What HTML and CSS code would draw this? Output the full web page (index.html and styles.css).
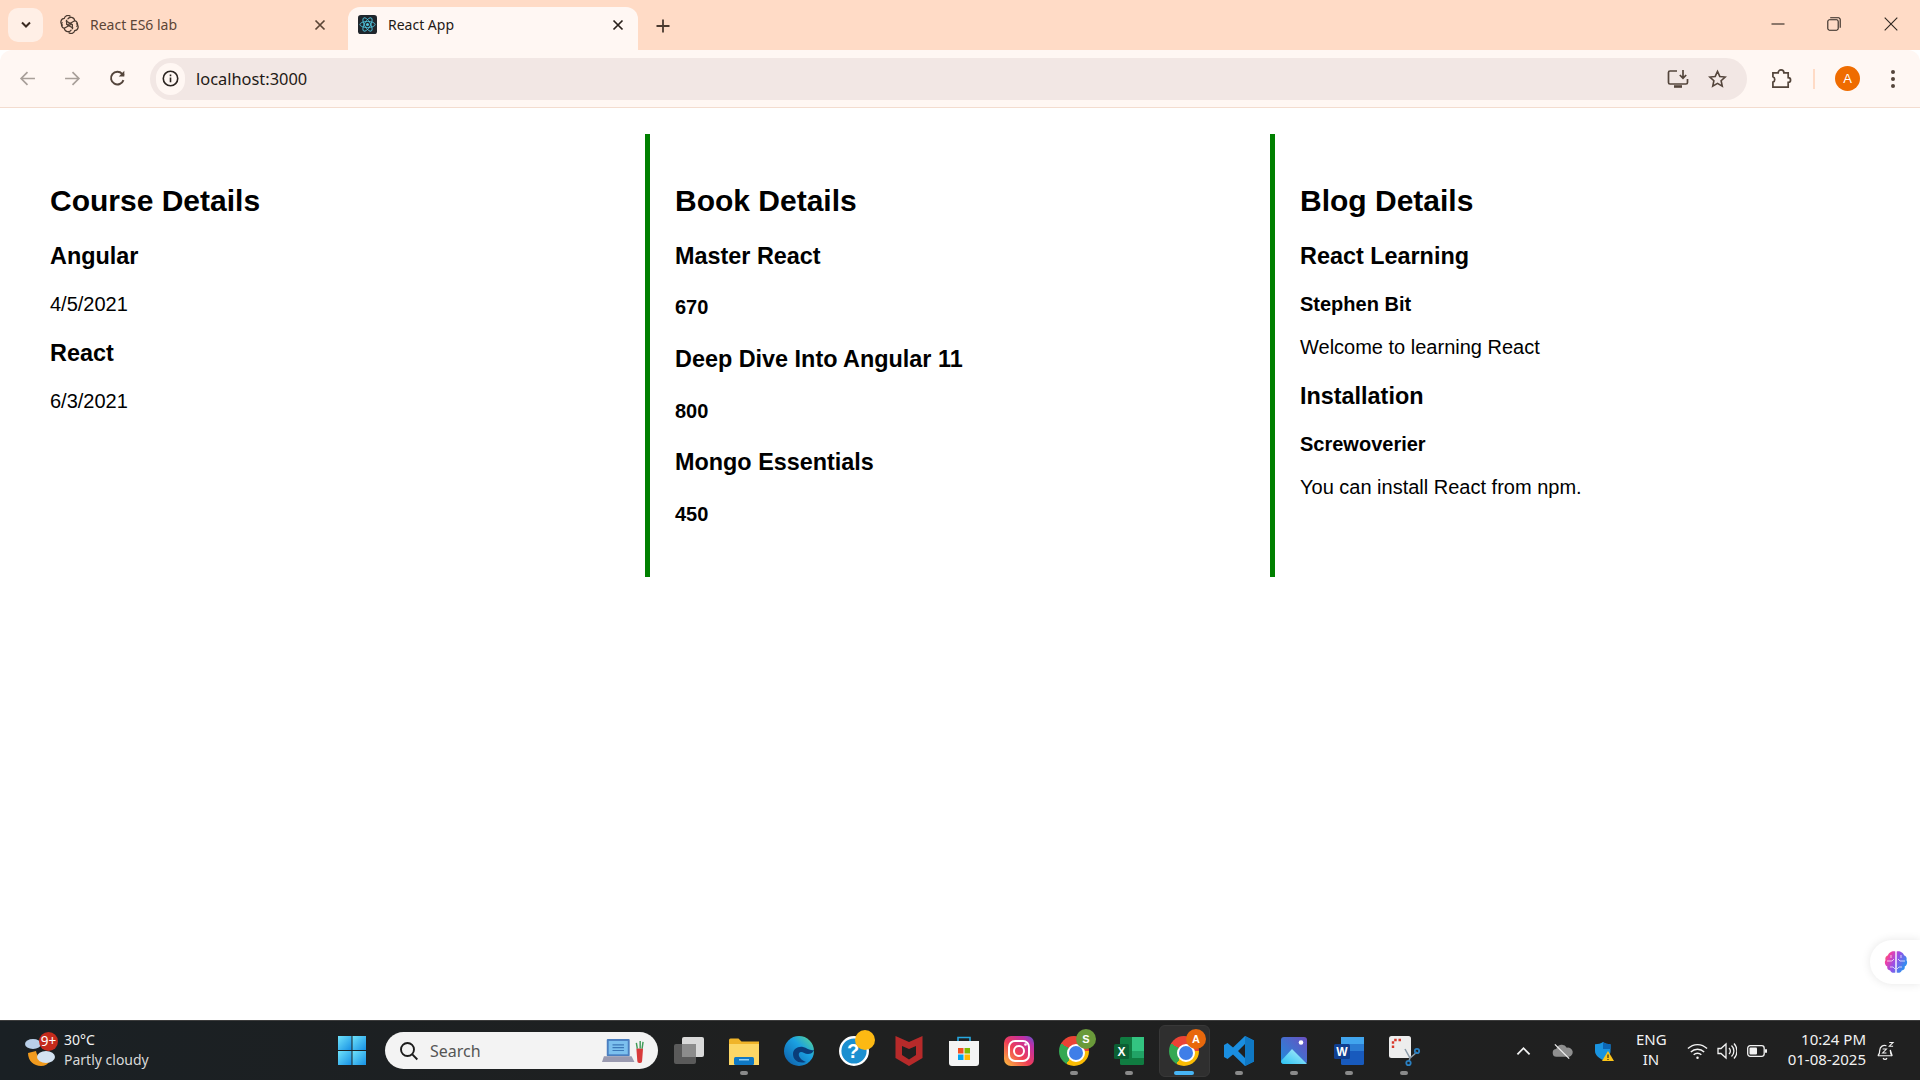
FILE: index.html
```html
<!DOCTYPE html>
<html lang="en">
<head>
    <meta charset="utf-8" />
    <title>React App</title>
    <link rel="stylesheet" href="styles.css">
</head>
<body>

<header class="tab-strip">
    <div class="tab-search">
        <svg width="12" height="8" viewBox="0 0 12 8"><path d="M2 1.5l4 4 4-4" fill="none" stroke="#3b2a20" stroke-width="2"/></svg>
    </div>
    <div class="tab">
        <svg class="favicon" viewBox="0 0 20 20" fill="none" stroke="#4a3a30" stroke-width="1.3">
            <path d="M8 4.500a4 4 0 0 1 7.500 1.500 4 4 0 0 1 2 6.500"/>
            <path d="M17 9a4 4 0 0 1-1.500 7.500 4 4 0 0 1-6.500 2"/>
            <path d="M12 15.500a4 4 0 0 1-7.500-1.500 4 4 0 0 1-2-6.500"/>
            <path d="M3 11a4 4 0 0 1 1.500-7.500 4 4 0 0 1 6.500-2"/>
            <path d="M6 6l7 4v5M14 14l-7-4V5"/>
            <path d="M4.500 14l8-4.500M15.500 6l-8 4.500"/>
        </svg>
        <span class="tab-title">React ES6 lab</span>
        <svg class="tab-close" viewBox="0 0 12 12"><path d="M1.500 1.500l9 9M10.500 1.500l-9 9" stroke="#5b4536" stroke-width="1.700"/></svg>
    </div>
    <div class="tab tab-active">
        <svg class="favicon" viewBox="0 0 20 20" fill="none" stroke="#4fc3dc" stroke-width="0.9">
            <rect width="20" height="20" rx="3" fill="#20262c" stroke="none"/>
            <ellipse cx="10" cy="10" rx="8" ry="3.2"/>
            <ellipse cx="10" cy="10" rx="8" ry="3.2" transform="rotate(60 10 10)"/>
            <ellipse cx="10" cy="10" rx="8" ry="3.2" transform="rotate(120 10 10)"/>
            <circle cx="10" cy="10" r="1.6" fill="#4fc3dc" stroke="none"/>
        </svg>
        <span class="tab-title">React App</span>
        <svg class="tab-close" viewBox="0 0 12 12"><path d="M1.500 1.500l9 9M10.500 1.500l-9 9" stroke="#2a211b" stroke-width="1.700"/></svg>
    </div>
    <svg class="new-tab" viewBox="0 0 14 14"><path d="M7 0.5v13M0.5 7h13" stroke="#4a3a30" stroke-width="1.8"/></svg>
    <div class="window-controls">
        <svg viewBox="0 0 14 14"><path d="M0.5 7h13" stroke="#2e2620" stroke-width="1.1"/></svg>
        <svg viewBox="0 0 14 14" fill="none" stroke="#2e2620" stroke-width="1.1"><rect x="0.8" y="2.8" width="10.4" height="10.4" rx="1.6"/><path d="M3.2 0.8h8.4a1.6 1.6 0 0 1 1.6 1.6v8.4"/></svg>
        <svg viewBox="0 0 14 14"><path d="M0.7 0.7l12.6 12.6M13.3 0.7l-12.6 12.6" stroke="#2e2620" stroke-width="1.1"/></svg>
    </div>
</header>

<nav class="toolbar">
    <svg class="tool-icon" viewBox="0 0 16 16" fill="none" stroke="#a89f99" stroke-width="1.6"><path d="M15 8H2M8 2L2 8l6 6"/></svg>
    <svg class="tool-icon" viewBox="0 0 16 16" fill="none" stroke="#a89f99" stroke-width="1.6"><path d="M1 8h13M8 2l6 6-6 6"/></svg>
    <svg class="tool-icon" viewBox="0 0 16 16" fill="none" stroke="#54453b" stroke-width="1.8"><path d="M13.6 9.5A6 6 0 1 1 12.4 3.6L14 5.2"/><path d="M14.4 0.8v5.2H9.2" stroke="none" fill="#54453b"/></svg>
    <div class="omnibox">
        <div class="site-info">
            <svg viewBox="0 0 16 16" width="17" height="17" fill="none" stroke="#2b2420" stroke-width="1.5"><circle cx="8" cy="8" r="6.8"/><path d="M8 7v4.6M8 4.2v1.6"/></svg>
        </div>
        <span class="url">localhost:3000</span>
        <svg class="omni-icon omni-install" viewBox="0 0 22 20" fill="none" stroke="#54453b" stroke-width="1.7"><path d="M10 2H3a1.5 1.5 0 0 0-1.5 1.500v10A1.500 1.500 0 0 0 3 15h16a1.500 1.500 0 0 0 1.500-1.500V10"/><path d="M16 1v8M12.800 6l3.200 3.200L19.200 6"/><path d="M7 17.500h8" stroke-width="2.600"/></svg>
        <svg class="omni-icon omni-star" viewBox="0 0 20 20" fill="none" stroke="#54453b" stroke-width="1.700"><path d="M10 2l2.400 5.300 5.700 0.600-4.300 3.900 1.200 5.700-5-2.900-5 2.900 1.200-5.700-4.300-3.900 5.700-0.600z"/></svg>
    </div>
    <svg class="tool-icon ext-icon" viewBox="0 0 22 22" fill="none" stroke="#54453b" stroke-width="1.800"><path d="M2 5h5.500a3 3 0 0 1 6 0H18v5a2.500 2.500 0 0 1 0 5v5H2v-5.200a3 3 0 0 0 0-5.600z"/></svg>
    <span class="toolbar-divider"></span>
    <div class="avatar">A</div>
    <svg class="tool-icon menu-icon" viewBox="0 0 6 20" fill="#54453b"><circle cx="3" cy="3" r="2"/><circle cx="3" cy="10" r="2"/><circle cx="3" cy="17" r="2"/></svg>
</nav>

<main class="page">
    <section class="column column-first">
        <h1>Course Details</h1>
        <h3>Angular</h3>
        <p>4/5/2021</p>
        <h3>React</h3>
        <p>6/3/2021</p>
    </section>
    <section class="column">
        <h1>Book Details</h1>
        <h3>Master React</h3>
        <h4>670</h4>
        <h3>Deep Dive Into Angular 11</h3>
        <h4>800</h4>
        <h3>Mongo Essentials</h3>
        <h4>450</h4>
    </section>
    <section class="column">
        <h1>Blog Details</h1>
        <h3>React Learning</h3>
        <p class="blog-author">Stephen Bit</p>
        <p>Welcome to learning React</p>
        <h3>Installation</h3>
        <p class="blog-author">Screwoverier</p>
        <p>You can install React from npm.</p>
    </section>
    <div class="side-widget">
        <svg viewBox="0 0 24 24" width="24" height="24">
            <defs><linearGradient id="brain" x1="0" y1="0" x2="1" y2="0.5"><stop offset="0" stop-color="#f57a3c"/><stop offset="0.25" stop-color="#ee3fa8"/><stop offset="0.55" stop-color="#9a4fe6"/><stop offset="1" stop-color="#2f8ff0"/></linearGradient></defs>
            <path fill="url(#brain)" d="M11.300 1.500v21c-2 .8-4.500 0-5-2-2.300-.200-3.500-2-3-4C1 15.500.2 12 1.500 10.200.8 8 2 5.800 4 5.300 4.500 2.800 8.500.5 11.300 1.500zM12.700 1.500v21c2 .8 4.500 0 5-2 2.300-.200 3.500-2 3-4 2.300-1 3.100-4.500 1.800-6.300.7-2.200-.5-4.400-2.500-4.900-.5-2.500-4.500-4.800-7.300-3.800z"/>
            <path fill="none" stroke="#fff" stroke-width="0.700" d="M3 11h5l2-2M7 5v3M21 11h-5l-2-2M17 5v3M6 17h3l2 2M18 17h-3l-2 2"/>
        </svg>
    </div>
</main>

<footer class="taskbar">
    <div class="weather">
        <svg class="weather-icon" viewBox="0 0 30 28">
            <path d="M3 15c0 8 6 13 13 13 4 0 7-2 9-5-8 1-13-4-14-10z" fill="#f09a1e"/>
            <ellipse cx="8" cy="6" rx="8" ry="5" fill="#b9cfe8"/>
            <ellipse cx="21" cy="19" rx="9" ry="6" fill="#d3e2f2"/>
        </svg>
        <span class="weather-badge">9+</span>
        <div class="weather-text">
            <div>30°C</div>
            <div class="weather-sub">Partly cloudy</div>
        </div>
    </div>

    <svg class="start" viewBox="0 0 28 29">
        <defs><linearGradient id="win" x1="0" y1="0" x2="1" y2="1"><stop offset="0" stop-color="#6fe3fb"/><stop offset="1" stop-color="#1690e4"/></linearGradient></defs>
        <rect width="13.500" height="14" fill="url(#win)"/><rect x="14.500" width="13.500" height="14" fill="url(#win)"/>
        <rect y="15" width="13.500" height="14" fill="url(#win)"/><rect x="14.500" y="15" width="13.500" height="14" fill="url(#win)"/>
    </svg>

    <div class="search">
        <svg width="20" height="20" viewBox="0 0 20 20" fill="none" stroke="#1c1c1c" stroke-width="1.900"><circle cx="8.500" cy="8.500" r="6.500"/><path d="M13.300 13.300l5 5.200"/></svg>
        <span class="search-label">Search</span>
        <svg class="search-art" viewBox="0 0 44 28">
            <rect x="5" y="2" width="24" height="18" rx="1" fill="#4b7fc0"/><rect x="7" y="4" width="20" height="14" fill="#7cc0ee"/>
            <path d="M11 8h12M11 11h12M11 14h12" stroke="#3c78b8" stroke-width="1.300"/>
            <path d="M2 20h29l3 6H0z" fill="#9a9ab0"/>
            <path d="M36 12h7l-1 13a2 2 0 0 1-2 2h-1a2 2 0 0 1-2-2z" fill="#d83a3a"/>
            <path d="M37 12l-1-6M40 12V4M42 12l1-7" stroke-width="1.500" stroke="#3f9b57"/>
        </svg>
    </div>

    <div class="task-icons">
        <div class="task">
            <svg viewBox="0 0 30 30"><rect x="0" y="8" width="22" height="20" rx="2" fill="#5a5a5a"/><rect x="8" y="1" width="22" height="20" rx="2" fill="#d9d9d9"/><rect x="8" y="8" width="14" height="13" fill="#8c8c8c"/></svg>
        </div>
        <div class="task task-open">
            <svg viewBox="0 0 30 30"><path d="M0 4a1.500 1.500 0 0 1 1.500-1.500h8l3 3H30v23H0z" fill="#f0b429"/><path d="M0 8h30v21H0z" fill="#fcd766"/><rect x="5" y="21" width="20" height="8" rx="1.500" fill="#0f78c4"/><rect x="10" y="23" width="10" height="1.500" fill="#8fd0f5"/></svg>
        </div>
        <div class="task">
            <svg viewBox="0 0 30 30"><defs><linearGradient id="edge" x1="0" y1="1" x2="1" y2="0"><stop offset="0" stop-color="#0c59a4"/><stop offset="0.6" stop-color="#1ba1e2"/><stop offset="1" stop-color="#5fdc8a"/></linearGradient></defs><circle cx="15" cy="15" r="15" fill="url(#edge)"/><path d="M9 18c0-5 5-8 10-7 4 1 7 4 11 3 0 0-1 4-6 4-3 0-5-2-7-2-3 0-3 4 0 7 2 2 5 3 5 3C14 28 9 24 9 18z" fill="#0a3d7a"/></svg>
        </div>
        <div class="task">
            <svg viewBox="0 0 30 30"><circle cx="15" cy="15" r="13.800" fill="#1b8fd0" stroke="#fff" stroke-width="2.400"/><text x="14" y="22" text-anchor="middle" font-family="Liberation Sans" font-weight="700" font-size="20" fill="#fff">?</text><circle cx="26" cy="4" r="10" fill="#fdb913"/></svg>
        </div>
        <div class="task">
            <svg viewBox="0 0 30 30"><path d="M1.500 0l13.500 6L28.500 0v22L15 30 1.500 22zM8 10v9l7 4.500 7-4.500v-9l-7 3z" fill="#b72a2a" fill-rule="evenodd"/></svg>
        </div>
        <div class="task">
            <svg viewBox="0 0 30 30"><path d="M9 5V1.500h12V5" fill="none" stroke="#27a8e0" stroke-width="1.600"/><path d="M0 5h30v22a3 3 0 0 1-3 3H3a3 3 0 0 1-3-3z" fill="#f4f4f4"/><rect x="9" y="12" width="5.500" height="5.500" fill="#f25022"/><rect x="15.500" y="12" width="5.500" height="5.500" fill="#7fba00"/><rect x="9" y="18.500" width="5.500" height="5.500" fill="#00a4ef"/><rect x="15.500" y="18.500" width="5.500" height="5.500" fill="#ffb900"/></svg>
        </div>
        <div class="task">
            <svg viewBox="0 0 30 30"><defs><linearGradient id="insta" x1="0" y1="1" x2="1" y2="0"><stop offset="0" stop-color="#fdc33b"/><stop offset="0.45" stop-color="#ef3d57"/><stop offset="0.8" stop-color="#bf2fa6"/><stop offset="1" stop-color="#5a55d0"/></linearGradient></defs><rect width="30" height="30" rx="7" fill="url(#insta)"/><rect x="5" y="5" width="20" height="20" rx="6" fill="none" stroke="#fff" stroke-width="2"/><circle cx="15" cy="15" r="5" fill="none" stroke="#fff" stroke-width="2"/><circle cx="21.500" cy="8.500" r="1.300" fill="#fff"/></svg>
        </div>
        <div class="task task-open">
            <span class="chrome-icon"></span>
            <span class="task-badge task-badge-green">S</span>
        </div>
        <div class="task task-open">
            <svg viewBox="0 0 30 30"><rect x="6" y="1" width="24" height="28" rx="1.500" fill="#107c41"/><rect x="18" y="1" width="12" height="14" fill="#33c481"/><rect x="18" y="15" width="12" height="7" fill="#21a366"/><rect x="0" y="8" width="15" height="15" rx="1.500" fill="#0b5f33"/><text x="7.500" y="20" text-anchor="middle" font-family="Liberation Sans" font-weight="700" font-size="12" fill="#fff">X</text></svg>
        </div>
        <div class="task task-active">
            <span class="chrome-icon"></span>
            <span class="task-badge task-badge-orange">A</span>
        </div>
        <div class="task task-open">
            <svg viewBox="0 0 30 30"><path d="M21 0l9 4.500v21L21 30 9 18.500 3.500 23 0 21V9l3.500-2L9 11.500zM21 8l-7 7 7 7z" fill="#1a8ee0" fill-rule="evenodd"/><path d="M21 0l9 4.500v21L21 30V22l0-14z" fill="#0f78c4"/></svg>
        </div>
        <div class="task task-open">
            <svg viewBox="0 0 30 30"><defs><linearGradient id="pics" x1="0" y1="1" x2="1" y2="0"><stop offset="0" stop-color="#1c8edc"/><stop offset="1" stop-color="#6b4fc0"/></linearGradient><linearGradient id="peak" x1="0" y1="1" x2="1" y2="0"><stop offset="0" stop-color="#2bc3f2"/><stop offset="1" stop-color="#b9effb"/></linearGradient></defs><rect x="2" y="1" width="26" height="27" rx="3" fill="url(#pics)"/><path d="M2 25l11-12 6 6 9 9H5a3 3 0 0 1-3-3z" fill="url(#peak)"/><circle cx="22" cy="6.500" r="2.300" fill="#fff"/></svg>
        </div>
        <div class="task task-open">
            <svg viewBox="0 0 30 30"><rect x="7" y="1" width="23" height="28" rx="1.500" fill="#185abd"/><rect x="7" y="1" width="23" height="7" fill="#41a5ee"/><rect x="7" y="8" width="23" height="7" fill="#2b7cd3"/><rect x="0" y="8" width="16" height="15" rx="1.500" fill="#103f91"/><text x="8" y="20" text-anchor="middle" font-family="Liberation Sans" font-weight="700" font-size="12" fill="#fff">W</text></svg>
        </div>
        <div class="task task-open">
            <svg viewBox="0 0 30 30"><rect x="0" y="0" width="22" height="22" rx="2.500" fill="#ededed"/><path d="M4 12V5a1 1 0 0 1 1-1h8" fill="none" stroke="#d9392b" stroke-width="2.400" stroke-dasharray="2.500 1.800"/><path d="M16 13l5 9 7-6M21 22l-1 3" fill="none" stroke="#8a9aa8" stroke-width="1.500"/><circle cx="28" cy="15" r="2.200" fill="none" stroke="#2a7fc0" stroke-width="1.800"/><circle cx="19.500" cy="27" r="2.200" fill="none" stroke="#2a7fc0" stroke-width="1.800"/></svg>
        </div>
    </div>

    <div class="tray">
        <svg class="tray-caret" viewBox="0 0 16 10"><path d="M1.500 8.500L8 2l6.500 6.500" fill="none" stroke="#f2f2f2" stroke-width="1.900"/></svg>
        <svg class="tray-cloud" viewBox="0 0 22 18"><path d="M5 15a4 4 0 0 1-.5-8 6 6 0 0 1 11-1.500A4.800 4.800 0 0 1 18 15z" fill="#8f8f8f"/><path d="M3 2l15 15" stroke="#f2f2f2" stroke-width="1.300"/></svg>
        <svg class="tray-shield" viewBox="0 0 20 20"><path d="M9 1c2 1.500 4.500 2.200 7.500 2.200V10c0 4-3 7-7.500 9-4.500-2-8-5-8-9V3.200C4 3.200 7 2.500 9 1z" fill="#1a94e0"/><path d="M9 1c2 1.500 4.500 2.200 7.500 2.200V8H9z" fill="#0c66b5"/><path d="M14 10l6 10H8z" fill="#fcc419"/><path d="M14 13.500v3.500M14 18v1" stroke="#222" stroke-width="1.100"/></svg>
        <div class="tray-lang">ENG<br>IN</div>
        <svg class="tray-wifi" viewBox="0 0 22 18" fill="none" stroke="#f2f2f2" stroke-width="1.500"><path d="M1 6.500a14 14 0 0 1 20 0M4 10a10 10 0 0 1 14 0M7 13a5.500 5.500 0 0 1 8 0"/><circle cx="11" cy="16" r="1.300" fill="#f2f2f2" stroke="none"/></svg>
        <svg class="tray-sound" viewBox="0 0 20 18" fill="none" stroke="#f2f2f2" stroke-width="1.300"><path d="M1 6.500v5h3l5 4.500V2L4 6.500z"/><path d="M12 6a4 4 0 0 1 0 6M14.500 3.500a7.500 7.500 0 0 1 0 11M17 1.500a11 11 0 0 1 0 15"/></svg>
        <svg class="tray-battery" viewBox="0 0 20 12"><rect x="0.700" y="0.700" width="16.500" height="10.600" rx="2.500" fill="none" stroke="#f2f2f2" stroke-width="1.300"/><rect x="2.500" y="2.500" width="7.500" height="7" rx="1" fill="#f2f2f2"/><rect x="18" y="4" width="2" height="4" rx="1" fill="#f2f2f2"/></svg>
        <div class="tray-clock">10:24 PM<br>01-08-2025</div>
        <svg class="tray-bell" viewBox="0 0 20 20" fill="none" stroke="#f2f2f2" stroke-width="1.300"><path d="M2 15c1.500-1.500 2-3 2-6a5 5 0 0 1 7-4.500M15 9c0 3 .5 4.500 2 6z"/><path d="M2 15h15M7.500 17.500a2.200 2.200 0 0 0 4 0"/><path d="M7 8h4l-4 4h4M14 1h4l-4 4h4" stroke-width="1.100"/></svg>
    </div>
</footer>

</body>
</html>
```

FILE: styles.css
```css
* {
    box-sizing: border-box;
}

html, body {
    height: 100%;
}

body {
    margin: 0;
    display: flex;
    flex-direction: column;
    height: 100vh;
    overflow: hidden;
    background: #fff;
    font-family: "Liberation Sans", Arial, sans-serif;
    color: #000;
}

/* browser tabs */
.tab-strip {
    display: flex;
    align-items: flex-end;
    height: 50px;
    flex-shrink: 0;
    background: #ffdbc6;
    position: relative;
    font-family: "Noto Sans", sans-serif;
    font-size: 14px;
}

.tab-search {
    width: 35px;
    height: 34px;
    margin: 0 0 8px 8px;
    border-radius: 10px;
    background: #ffefe6;
    display: flex;
    align-items: center;
    justify-content: center;
}

.tab {
    display: flex;
    align-items: center;
    width: 290px;
    height: 43px;
    padding: 0 14px 8px 10px;
    color: #5b4536;
}

.tab-search + .tab {
    width: 305px;
    padding-left: 17px;
    padding-right: 22px;
}

.tab-active {
    background: #fff7f3;
    border-radius: 12px 12px 0 0;
    color: #1f1a16;
}

.favicon {
    width: 19px;
    height: 19px;
    flex-shrink: 0;
}

.tab-title {
    flex: 1;
    margin-left: 11px;
}

.tab-close {
    width: 12px;
    height: 12px;
}

.new-tab {
    width: 14px;
    height: 14px;
    margin: 0 0 17px 18px;
}

.window-controls {
    display: flex;
    align-items: center;
    margin: 0 22px 19px auto;
}

.window-controls svg {
    width: 14px;
    height: 14px;
    margin-left: 43px;
}

.window-controls svg:first-child {
    margin-left: 0;
}

.window-controls svg:nth-child(2) {
    margin-left: 42px;
}

/* address bar row */
.toolbar {
    display: flex;
    align-items: center;
    height: 58px;
    flex-shrink: 0;
    padding: 0 0 0 19px;
    background: #fff7f3;
    border-bottom: 1px solid #f3dccf;
    border-radius: 12px 12px 0 0;
}

.tool-icon {
    width: 17px;
    height: 17px;
    margin-right: 28px;
    flex-shrink: 0;
}

.tool-icon:nth-child(3) {
    margin-right: 24px;
}

.omnibox {
    display: flex;
    align-items: center;
    width: 1597px;
    height: 42px;
    border-radius: 21px;
    background: #f2e7e4;
    padding-left: 6px;
    font-family: "Noto Sans", sans-serif;
    font-size: 16.4px;
    color: #1f1a16;
}

.site-info {
    width: 29px;
    height: 32px;
    border-radius: 16px;
    background: #fff7f3;
    display: flex;
    align-items: center;
    justify-content: center;
}

.url {
    margin-left: 11px;
    flex: 1;
}

.omni-icon {
    width: 22px;
    height: 20px;
}

.omni-star {
    margin: 0 20px 0 19px;
    width: 19px;
}

.ext-icon {
    width: 21px;
    height: 21px;
    margin: 0 21px 0 24px;
}

.toolbar-divider {
    width: 2px;
    height: 20px;
    background: #ffdbc6;
}

.avatar {
    width: 25px;
    height: 25px;
    margin-left: 20px;
    border-radius: 50%;
    background: #ef6c00;
    color: #fff;
    font-size: 13px;
    line-height: 25px;
    text-align: center;
}

.menu-icon {
    width: 6px;
    height: 20px;
    margin: 0 0 0 30px;
}

/* page content */
.page {
    flex: 1;
    position: relative;
    display: grid;
    grid-template-columns: repeat(3, 625px);
    grid-template-rows: 443px;
    padding: 26px 0 0 20px;
}

.column {
    padding: 25px;
    border-left: 5px solid green;
}

.column-first {
    border-left-color: transparent;
}

.column h1 {
    font-size: 30px;
    margin: 24.9px 0;
}

.column h3 {
    font-size: 23.4px;
    margin: 23.4px 0;
}

.column h4 {
    font-size: 20px;
    margin: 26.6px 0;
}

.column p {
    font-size: 20px;
    margin: 20px 0;
}

.column .blog-author {
    font-weight: bold;
}

.side-widget {
    position: absolute;
    right: 0;
    top: 832px;
    width: 50px;
    height: 44px;
    border-radius: 22px 0 0 22px;
    background: #fff;
    box-shadow: 0 0 10px rgba(0, 0, 0, 0.1);
    display: flex;
    align-items: center;
    padding-left: 14px;
}

/* windows taskbar */
.taskbar {
    display: flex;
    align-items: center;
    height: 60px;
    flex-shrink: 0;
    background: linear-gradient(90deg, #1a2024, #1f2020 40%, #202020);
    border-top: 1px solid #3c3c3c;
    color: #f2f2f2;
    font-family: "Noto Sans", sans-serif;
    font-size: 14px;
}

.weather {
    position: relative;
    display: flex;
    align-items: center;
    width: 338px;
    padding-left: 25px;
}

.weather-icon {
    width: 30px;
    height: 28px;
    margin-top: 3px;
}

.weather-badge {
    position: absolute;
    left: 39px;
    top: 0;
    width: 19px;
    height: 19px;
    border-radius: 50%;
    background: #c42b1c;
    font-size: 13.5px;
    line-height: 18px;
    text-align: center;
    color: #fff;
}

.weather-text {
    margin: -2px 0 0 9px;
    line-height: 20px;
}

.weather-sub {
    color: #d8d8d8;
}

.start {
    width: 28px;
    height: 29px;
}

.search {
    display: flex;
    align-items: center;
    width: 273px;
    height: 37px;
    margin-left: 19px;
    padding: 0 14px 0 14px;
    border-radius: 19px;
    background: #f3f3f3;
    color: #555;
    font-size: 16px;
}

.search-label {
    flex: 1;
    margin-left: 11px;
}

.search-art {
    width: 42px;
    height: 27px;
}

.task-icons {
    display: flex;
    height: 59px;
    margin-left: 3px;
}

.task {
    position: relative;
    display: flex;
    align-items: center;
    justify-content: center;
    width: 55px;
    height: 59px;
}

.task svg {
    width: 30px;
    height: 30px;
    overflow: visible;
}

.task-open::after {
    content: "";
    position: absolute;
    left: 24px;
    bottom: 5px;
    width: 8px;
    height: 4px;
    border-radius: 2px;
    background: #8a8a8a;
}

.task-active::before {
    content: "";
    position: absolute;
    left: 3px;
    top: 4px;
    width: 49px;
    height: 50px;
    border-radius: 6px;
    background: #2f2f2f;
    border: 1px solid #383838;
}

.task-active::after {
    content: "";
    position: absolute;
    left: 18px;
    bottom: 5px;
    width: 20px;
    height: 4px;
    border-radius: 2px;
    background: #47b5f5;
}

.chrome-icon {
    position: relative;
    width: 30px;
    height: 30px;
    border-radius: 50%;
    background: conic-gradient(#ea4335 0 90deg, #fbbc04 90deg 210deg, #34a853 210deg 300deg, #ea4335 300deg);
}

.chrome-icon::after {
    content: "";
    position: absolute;
    left: 8px;
    top: 8px;
    width: 14px;
    height: 14px;
    border-radius: 50%;
    background: #3f7ee8;
    border: 2px solid #fff;
}

.task-badge {
    position: absolute;
    left: 30px;
    top: 8px;
    width: 20px;
    height: 20px;
    border-radius: 50%;
    color: #fff;
    font-family: "Liberation Sans", sans-serif;
    font-size: 11px;
    font-weight: 700;
    line-height: 20px;
    text-align: center;
}

.task-badge-green {
    background: #6a9a3a;
}

.task-badge-orange {
    background: #e8680c;
}

.tray {
    display: flex;
    align-items: center;
    margin-left: auto;
    padding-right: 25px;
    font-size: 15px;
}

.tray svg {
    flex-shrink: 0;
}

.tray-caret {
    width: 15px;
    height: 10px;
}

.tray-cloud {
    width: 21px;
    height: 18px;
    margin-left: 21px;
}

.tray-shield {
    width: 20px;
    height: 20px;
    margin-left: 21px;
}

.tray-lang {
    width: 30px;
    margin: -3px 0 0 22px;
    text-align: center;
    line-height: 20px;
}

.tray-wifi {
    width: 21px;
    height: 18px;
    margin-left: 21px;
}

.tray-sound {
    width: 20px;
    height: 18px;
    margin-left: 9px;
}

.tray-battery {
    width: 20px;
    height: 12px;
    margin-left: 10px;
}

.tray-clock {
    width: 90px;
    margin: -3px 0 0 9px;
    text-align: right;
    line-height: 20px;
}

.tray-bell {
    width: 19px;
    height: 20px;
    margin-left: 10px;
}
```
